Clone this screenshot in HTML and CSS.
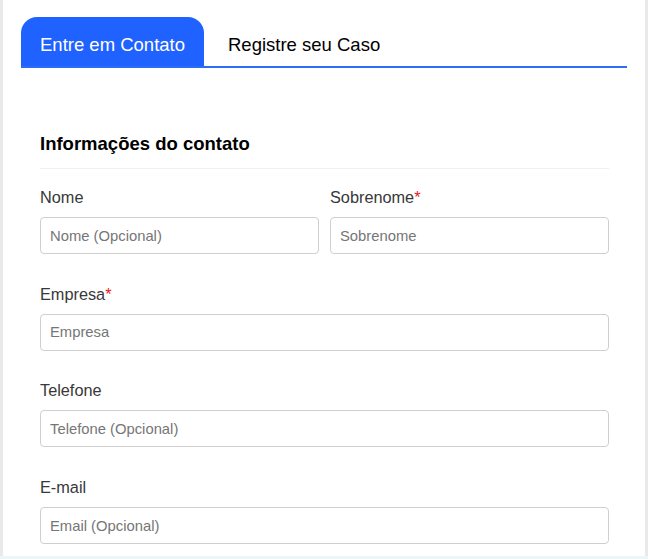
FILE: index.html
```html
<!DOCTYPE html>
<html lang="pt">
<head>
<meta charset="utf-8">
<title>Contato</title>
<link rel="stylesheet" href="styles.css">
</head>
<body>
<div class="page">
  <div class="tabs">
    <div class="tab active">Entre em Contato</div>
    <div class="tab">Registre seu Caso</div>
  </div>
  <form class="form">
    <h2 class="section-title">Informações do contato</h2>
    <div class="row two">
      <div class="field">
        <label class="label">Nome</label>
        <input class="input" type="text" placeholder="Nome (Opcional)">
      </div>
      <div class="field">
        <label class="label">Sobrenome<span class="req">*</span></label>
        <input class="input" type="text" placeholder="Sobrenome">
      </div>
    </div>
    <div class="row">
      <div class="field">
        <label class="label">Empresa<span class="req">*</span></label>
        <input class="input" type="text" placeholder="Empresa">
      </div>
    </div>
    <div class="row">
      <div class="field">
        <label class="label">Telefone</label>
        <input class="input" type="text" placeholder="Telefone (Opcional)">
      </div>
    </div>
    <div class="row">
      <div class="field">
        <label class="label">E-mail</label>
        <input class="input" type="text" placeholder="Email (Opcional)">
      </div>
    </div>
  </form>
</div>
</body>
</html>
```
FILE: styles.css
```css
html, body {
  margin: 0;
  padding: 0;
}
body {
  background: #eef5f7;
  font-family: "Liberation Sans", Arial, sans-serif;
  color: #333;
  height: 559px;
  overflow: hidden;
}
.page {
  box-sizing: border-box;
  width: 648px;
  height: 556px;
  background: #fff;
  border-left: 3px solid #e9e9e9;
  border-right: 3px solid #e9e9e9;
  padding: 17px 18px 0 18px;
  overflow: hidden;
}
.tabs {
  display: flex;
  gap: 5px;
  border-bottom: 2px solid #2d6cf6;
}
.tab {
  height: 49px;
  padding: 7px 19px 0 19px;
  display: flex;
  align-items: center;
  font-size: 18.5px;
  color: #000;
  box-sizing: border-box;
}
.tab.active {
  background: #1f62ff;
  color: #fff;
  border-radius: 16px 16px 0 0;
}
.form {
  padding: 64px 18px 0 19px;
  margin: 0;
}
.section-title {
  margin: 0 0 17px 0;
  font-size: 18.5px;
  line-height: 24px;
  font-weight: bold;
  color: #000;
  padding-bottom: 12px;
  border-bottom: 1px solid #f0f0f0;
}
.row {
  display: grid;
  grid-template-columns: 1fr;
  gap: 11px;
  margin-bottom: 28.7px;
}
.row.two {
  grid-template-columns: 1fr 1fr;
}
.field {
  display: flex;
  flex-direction: column;
  min-width: 0;
}
.label {
  font-size: 16.3px;
  line-height: 22px;
  color: #383838;
  margin-bottom: 9px;
}
.req {
  color: #e41b1b;
}
.input {
  box-sizing: border-box;
  height: 37px;
  border: 1px solid #cfcfcf;
  border-radius: 4px;
  padding: 0 9px;
  font-family: "Liberation Sans", Arial, sans-serif;
  font-size: 14.8px;
  color: #333;
  background: #fff;
  outline: none;
  width: 100%;
}
.input::placeholder {
  color: #767676;
}
```
